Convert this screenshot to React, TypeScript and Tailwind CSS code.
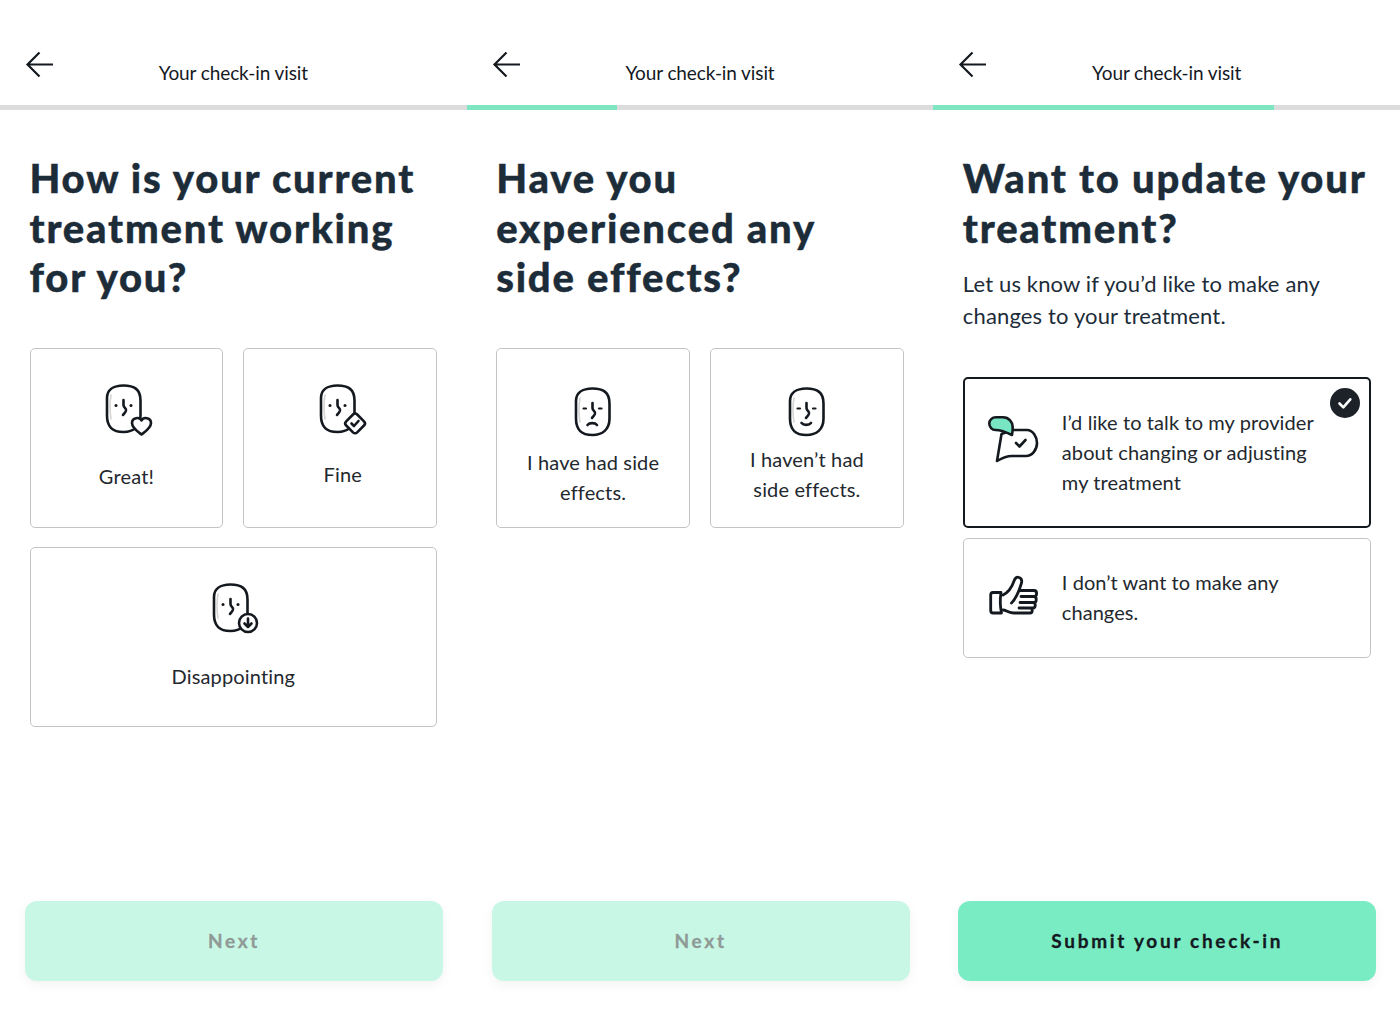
import React from "react";

const ink = "#14191f";

function BackArrow() {
  return (
    <svg width="30" height="28" viewBox="0 0 30 28" fill="none" stroke={ink} strokeWidth="2.2">
      <path d="M28 13.5H3M14.5 1.5 2.5 13.5l12 12" />
    </svg>
  );
}

type FaceKind = "heart" | "check" | "down" | "sad" | "smile";

// face outline shared by all the answer icons, badge/mouth differs
function FaceIcon({ kind }: { kind: FaceKind }) {
  const plain = kind === "sad" || kind === "smile";
  return (
    <svg width="52" height="54" viewBox="0 0 52 54" fill="none" stroke={ink} strokeWidth="2.6" strokeLinecap="round" strokeLinejoin="round">
      <path d="M7 12c-1.2 7-1.2 17 0 24" stroke="#d5d5d5" strokeWidth="1.6" />
      <path d="M19.5 2.5c11 0 17 4 17 15v15c0 11-7 16.5-17 16.5-11 0-16.5-5-16.5-16.5V15C3 7 9 2.5 19.5 2.5z" />
      {plain ? (
        <path d="M10.5 22.5h2.5M26 22.5h2.5" strokeWidth="2.2" />
      ) : (
        <>
          <circle cx="12" cy="22.5" r="1.5" fill={ink} stroke="none" />
          <circle cx="27" cy="22.5" r="1.5" fill={ink} stroke="none" />
        </>
      )}
      <path d="M19.5 17v5c0 3 3 3 2.5 5.5-.5 2-2 3-3 4.5" />
      {kind === "sad" && <path d="M14.5 39c2-2.5 7.5-2.5 9.5 0" />}
      {kind === "smile" && <path d="M14.5 37c2 2.5 7.5 2.5 9.5 0" />}
      {kind === "heart" && (
        <path fill="#fff" d="M37.5 51.5c-4-3-9.5-6.5-9.5-11.5 0-5.5 7.5-6.5 9.5-2.5 2-4 9.5-3 9.5 2.5 0 5-5.5 8.5-9.5 11.5z" />
      )}
      {kind === "check" && (
        <>
          <path fill="#fff" d="M35 31.5c1.2-1.2 3-1.2 4.2 0l6.8 6.8c1.2 1.2 1.2 3 0 4.2l-6.8 6.8c-1.2 1.2-3 1.2-4.2 0l-6.8-6.8c-1.2-1.2-1.2-3 0-4.2z" />
          <path d="M33.5 40.5l2.5 2.5 4.5-5" />
        </>
      )}
      {kind === "down" && (
        <>
          <circle cx="37" cy="41" r="9" fill="#fff" />
          <path d="M37 36.5v8.5M33.5 41.5l3.5 3.5 3.5-3.5" />
        </>
      )}
    </svg>
  );
}

function BubbleIcon() {
  return (
    <svg width="56" height="52" viewBox="0 0 56 52" fill="none" stroke={ink} strokeWidth="2.6" strokeLinecap="round" strokeLinejoin="round">
      <path d="M16.5 22 12 49c5-3 9-5 15-5h14c6 0 11-6 11-13 0-6-4-13-10-13H27z" fill="#fff" />
      <path d="M11 5.3h7c6 0 9.7 4.7 9.7 9.7 0 3-.2 5.5-.7 8-5-2.5-11-5-16.500-5C7 18 4.300 15 4.300 11.500S7 5.300 11 5.300z" fill="#79e6c3" />
      <path d="M31 31l3.5 3.5 6-6.5" />
    </svg>
  );
}

function ThumbIcon() {
  return (
    <svg width="52" height="44" viewBox="0 0 52 44" fill="none" stroke={ink} strokeWidth="2.8" strokeLinecap="round" strokeLinejoin="round">
      <path d="M13 17.5H5c-1.5 0-2.3 1-2.3 2.5v15.5c0 1.5.8 2.5 2.3 2.5h8.5c-1.5-7-1.5-14-.5-20.500z" />
      <path d="M15 20c6-3 9-8 11-14 1-3 3-4.500 5-3.500 3 1 3 3.500 2.500 5.500L31 15.500C29 20 27 25 23.500 28" />
      <path d="M31 15.500h15c3.500 0 3.500 6 0 6H33M46 21.500c3 0 3 6 0 6H32M45 27.500c3 0 3 5.500 0 5.500H31M42 33c3 0 3 5 0 5H26c-5 0-8-3-11-3" />
    </svg>
  );
}

function Choice({ kind, label, iconTop, gap, wide }: { kind: FaceKind; label: string; iconTop: string; gap: string; wide?: boolean }) {
  const plain = kind === "sad" || kind === "smile";
  return (
    <div className={`flex h-[180px] flex-col items-center rounded-[5px] border-[1.5px] border-[#c4c4c4] bg-white ${iconTop} ${wide ? "col-span-2" : ""}`}>
      <div className={plain ? "pl-[12px]" : "pl-[8px]"}>
        <FaceIcon kind={kind} />
      </div>
      <div className={`${gap} max-w-[150px] text-center text-[20px] leading-[30px] tracking-[0.15px] text-[#23282e]`}>{label}</div>
    </div>
  );
}

function Screen({ progress, title, children, cta, ready, right }: { progress: string; title: React.ReactNode; children: React.ReactNode; cta: string; ready?: boolean; right: string }) {
  return (
    <div className="flex h-[1011px] flex-col">
      <div className="grid h-[105px] grid-cols-[1fr_auto_1fr]">
        <div className="pl-[25px] pt-[51px]">
          <BackArrow />
        </div>
        <div className="pt-[60px] text-[19px] leading-[26px] tracking-[-0.1px] text-[#14191f]">Your check-in visit</div>
      </div>
      <div className="h-[5px] bg-[#dcdcdc]">
        <div className={`h-full bg-[#7fe6c2] ${progress}`} />
      </div>
      <div className={`flex flex-1 flex-col pl-[29.5px] pt-[44px] ${right}`}>
        <h1 className="text-[40px] font-black leading-[49.5px] tracking-[1.8px] text-[#1d2c39] [-webkit-text-stroke:0.4px_#1d2c39]">{title}</h1>
        {children}
      </div>
      <div className="pb-[30px] pl-[25px]">
        <div
          className={`flex h-[80px] w-[418px] items-center justify-center rounded-[12px] text-[19px] font-bold tracking-[2.7px] [-webkit-text-stroke:0.3px_currentColor] shadow-[0_4px_12px_rgba(0,0,0,0.05)] ${ready ? "bg-[#79ecc3] text-[#14191f]" : "bg-[#c8f7e6] text-[#8f9a96]"}`}
        >
          {cta}
        </div>
      </div>
    </div>
  );
}

export default function App() {
  return (
    <div className="grid h-[1011px] grid-cols-3 overflow-hidden bg-white font-['Lato',sans-serif]">
      <Screen
        progress="w-0"
        right="pr-[29.5px]"
        cta="Next"
        title={
          <>
            How is your current
            <br />
            treatment working
            <br />
            for you?
          </>
        }
      >
        <div className="mt-[45px] grid grid-cols-2 gap-x-[20px] gap-y-[19px]">
          <Choice kind="heart" label="Great!" iconTop="pt-[34px]" gap="mt-[24px]" />
          <Choice kind="check" label="Fine" iconTop="pt-[34px]" gap="mt-[22px] pl-[5px]" />
          <Choice kind="down" label="Disappointing" iconTop="pt-[34px]" gap="mt-[25px] max-w-none" wide />
        </div>
      </Screen>

      <Screen
        progress="w-[150px]"
        right="pr-[29.5px]"
        cta="Next"
        title={
          <>
            Have you
            <br />
            experienced any
            <br />
            side effects?
          </>
        }
      >
        <div className="mt-[45px] grid grid-cols-2 gap-x-[20px]">
          <Choice kind="sad" label="I have had side effects." iconTop="pt-[37px]" gap="mt-[7px]" />
          <Choice kind="smile" label="I haven’t had side effects." iconTop="pt-[37px]" gap="mt-[4px]" />
        </div>
      </Screen>

      <Screen
        progress="w-[341px]"
        right="pr-[29px]"
        cta="Submit your check-in"
        ready
        title={
          <>
            Want to update your
            <br />
            treatment?
          </>
        }
      >
        <p className="mt-[15px] text-[22px] leading-[32px] tracking-[0.15px] text-[#1d2c39]">
          Let us know if you’d like to make any
          <br />
          changes to your treatment.
        </p>
        <div className="relative mt-[45px] flex h-[151px] gap-[21px] rounded-[5px] border-2 border-[#14191f] pl-[20px]">
          <div className="pt-[33px]">
            <BubbleIcon />
          </div>
          <div className="pt-[28px] text-[20px] leading-[30px] tracking-[0.1px] text-[#23282e]">
            I’d like to talk to my provider
            <br />
            about changing or adjusting
            <br />
            my treatment
          </div>
          <div className="absolute right-[9px] top-[9px] flex h-[30px] w-[30px] items-center justify-center rounded-full bg-[#1c2228]">
            <svg width="18" height="18" viewBox="0 0 18 18" fill="none" stroke="#fff" strokeWidth="2.6" strokeLinecap="round" strokeLinejoin="round">
              <path d="M3.5 9.5l3.8 3.8 7-8" />
            </svg>
          </div>
        </div>
        <div className="mt-[10px] flex h-[120px] items-center gap-[22px] rounded-[5px] border-[1.5px] border-[#c4c4c4] pb-[3px] pl-[24px]">
          <ThumbIcon />
          <div className="text-[20px] leading-[30px] tracking-[0.05px] text-[#23282e]">
            I don’t want to make any
            <br />
            changes.
          </div>
        </div>
      </Screen>
    </div>
  );
}
